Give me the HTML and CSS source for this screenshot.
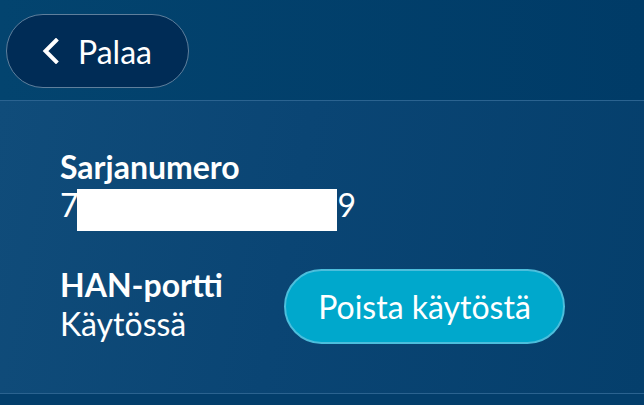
FILE: index.html
```html
<!DOCTYPE html>
<html>
  <head>
    <meta charset="utf-8" />
    <meta name="viewport" content="width=device-width, initial-scale=1.0" />
    <link rel="stylesheet" href="styles.css">
  </head>
  <body>
    <div class="top">
      <a href="#" class="back">
        <svg class="chev" width="18" height="26" viewBox="0 0 18 26"><path d="M14 2.5 L3.5 13 L14 23.5" fill="none" stroke="#fff" stroke-width="4" stroke-linecap="square" stroke-linejoin="miter"/></svg>
        <span>Palaa</span>
      </a>
    </div>
    <div class="panel">
      <div class="field">
        <div class="lbl">Sarjanumero</div>
        <div class="val">7<span class="mask"></span>9</div>
      </div>
      <div class="row">
        <div class="field col">
          <div class="lbl">HAN-portti</div>
          <div class="val">Käytössä</div>
        </div>
        <a href="#" class="btn">Poista käytöstä</a>
      </div>
    </div>
    <div class="foot"></div>
  </body>
</html>
```

FILE: styles.css
```css
* { box-sizing: border-box; }
html, body { margin: 0; padding: 0; height: 100%; }
body { background: #033e6b; font-family: Lato, "Open Sans", sans-serif; color: #fff; overflow: hidden; }
a { text-decoration: none; color: #fff; }

.top { height: 100px; padding: 14px 0 0 6px; background: linear-gradient(90deg, #03446f, #003b67); }
.back { display: inline-flex; align-items: center; height: 74px; width: 183px; padding-left: 35px; border: 1px solid #5f7f9c; border-radius: 37px; background: #002c56; font-size: 32px; }
.back .chev { margin-right: 18px; }

.panel { border-top: 1px solid #2b6390; border-bottom: 1px solid #2b6390; padding: 47px 0 49px 60px; height: 294px; background: linear-gradient(100deg, #104c7a 0%, #0a4574 45%, #053f6c 100%); }
.field { font-size: 32px; line-height: 38.4px; }
.lbl { font-weight: 700; }
.val { font-weight: 400; }
.mask { display: inline-block; width: 260px; height: 42px; background: #fff; margin: 0 1px -14px -2px; }

.row { display: flex; align-items: center; margin-top: 41px; }
.col { width: 224px; }
.btn { display: inline-flex; align-items: center; justify-content: center; width: 281px; height: 75px; border: 2px solid #4cbedc; border-radius: 38px; background: #00a8cc; font-size: 32px; margin-top: 3px; }

.foot { height: 12px; background: #033e6b; }
```
